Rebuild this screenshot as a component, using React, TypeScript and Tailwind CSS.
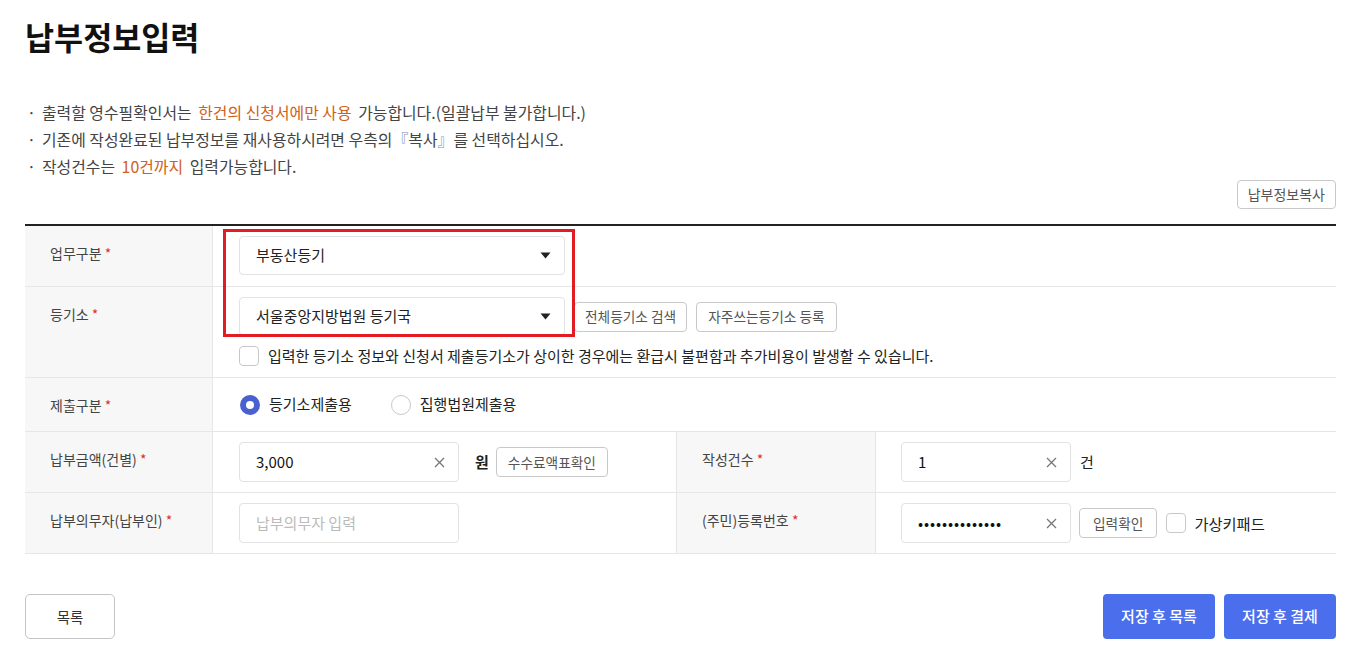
const font = { fontFamily: '"Noto Sans CJK KR", "Noto Sans", sans-serif' };

function Req({ children }: { children: React.ReactNode }) {
  return (
    <span>
      {children} <span className="text-[#e0312b]">*</span>
    </span>
  );
}

function Label({ children, wide }: { children: React.ReactNode; wide?: boolean }) {
  return (
    <div
      className={`bg-[#f7f7f7] border-r border-[#e6e6e6] pl-[25px] pt-[17px] text-[14px] leading-[20px] text-[#444] ${
        wide ? "w-[200px] border-l" : "w-[188px]"
      }`}
    >
      <Req>{children}</Req>
    </div>
  );
}

function Select({ value }: { value: string }) {
  return (
    <div className="flex h-[39px] w-[326px] items-center justify-between rounded-[4px] border border-[#e2e2e2] bg-white pl-[16px] pr-[13px] text-[15px] text-[#222]">
      <span>{value}</span>
      <svg width="11" height="7" viewBox="0 0 11 7">
        <path d="M0.5 0.5 L10.5 0.5 L5.5 6.5 Z" fill="#222" />
      </svg>
    </div>
  );
}

function SmallBtn({ children, className = "" }: { children: React.ReactNode; className?: string }) {
  return (
    <button
      className={`h-[30px] rounded-[4px] border border-[#c9c9c9] bg-white px-[10px] text-[13.7px] text-[#555] ${className}`}
    >
      {children}
    </button>
  );
}

function Check() {
  return <span className="inline-block h-[20px] w-[20px] shrink-0 rounded-[4px] border border-[#c9c9c9] bg-white" />;
}

function TextInput({
  value,
  placeholder,
  width,
  clear,
  dots,
}: {
  value?: string;
  placeholder?: string;
  width: string;
  clear?: boolean;
  dots?: boolean;
}) {
  return (
    <div
      className={`flex h-[40px] items-center justify-between rounded-[4px] border border-[#e2e2e2] bg-white pl-[16px] pr-[13px] text-[15px] ${width}`}
    >
      {value ? (
        <span className={dots ? "text-[15px] tracking-[0.9px] text-[#111]" : "text-[#111]"}>{value}</span>
      ) : (
        <span className="text-[#bbb]">{placeholder}</span>
      )}
      {clear && (
        <svg width="11" height="11" viewBox="0 0 11 11">
          <path d="M1 1 L10 10 M10 1 L1 10" stroke="#777" strokeWidth="1.3" />
        </svg>
      )}
    </div>
  );
}

export default function App() {
  return (
    <div className="min-h-[660px] bg-white text-[#333]" style={font}>
      <div className="ml-[25px] w-[1311px]">
        {/* Title */}
        <h1 className="pt-[14px] text-[31.6px] font-bold leading-[44px] text-[#111]">납부정보입력</h1>

        {/* Notice */}
        <ul className="mt-[42px] space-y-[1px] text-[15.9px] leading-[26px] text-[#444]">
          <li>
            <span className="mr-[6px] ml-[2px]">·</span>출력할 영수필확인서는{" "}
            <span className="mx-[3px] text-[#d0611a]">한건의 신청서에만 사용</span> 가능합니다.(일괄납부
            불가합니다.)
          </li>
          <li>
            <span className="mr-[6px] ml-[2px]">·</span>기존에 작성완료된 납부정보를 재사용하시려면 우측의
            <span className="text-[#7f8fb0]">『</span>복사<span className="text-[#7f8fb0]">』</span>를
            선택하십시오.
          </li>
          <li>
            <span className="mr-[6px] ml-[2px]">·</span>작성건수는{" "}
            <span className="mx-[3px] text-[#d0611a]">10건까지</span> 입력가능합니다.
          </li>
        </ul>

        <div className="flex justify-end">
          <button className="h-[29px] rounded-[4px] border border-[#c9c9c9] bg-white px-[10px] text-[14px] text-[#555]">
            납부정보복사
          </button>
        </div>

        {/* Form table */}
        <div className="mt-[15px] border-t-2 border-[#222]">
          {/* Row 1 */}
          <div className="flex h-[61px] border-b border-[#e6e6e6]">
            <Label>업무구분</Label>
            <div className="relative flex-1 pl-[26px] pt-[10px]">
              <Select value="부동산등기" />
              <div className="pointer-events-none absolute left-[10px] top-[3px] h-[108px] w-[352px] border-[3px] border-[#e31b23]" />
            </div>
          </div>
          {/* Row 2 */}
          <div className="flex h-[91px] border-b border-[#e6e6e6]">
            <Label>등기소</Label>
            <div className="flex-1 pl-[26px] pt-[10px]">
              <div className="flex items-center gap-[9px]">
                <Select value="서울중앙지방법원 등기국" />
                <SmallBtn>전체등기소 검색</SmallBtn>
                <SmallBtn className="px-[11px]">자주쓰는등기소 등록</SmallBtn>
              </div>
              <div className="mt-[9px] flex items-center gap-[9px] text-[15px] text-[#222]">
                <Check />
                <span>입력한 등기소 정보와 신청서 제출등기소가 상이한 경우에는 환급시 불편함과 추가비용이 발생할 수 있습니다.</span>
              </div>
            </div>
          </div>

          {/* Row 3 */}
          <div className="flex h-[54px] border-b border-[#e6e6e6]">
            <Label>제출구분</Label>
            <div className="flex flex-1 items-center pl-[27px] text-[15px] text-[#222]">
              <span className="flex items-center gap-[9px]">
                <span className="flex h-[20px] w-[20px] items-center justify-center rounded-full bg-[#4a5fd0]">
                  <span className="h-[8px] w-[8px] rounded-full bg-white" />
                </span>
                등기소제출용
              </span>
              <span className="ml-[39px] flex items-center gap-[9px]">
                <span className="h-[20px] w-[20px] rounded-full border border-[#c9c9c9] bg-white" />
                집행법원제출용
              </span>
            </div>
          </div>

          {/* Row 4 */}
          <div className="flex h-[61px] border-b border-[#e6e6e6]">
            <Label>납부금액(건별)</Label>
            <div className="flex w-[463px] items-center pl-[26px]">
              <TextInput value="3,000" width="w-[220px]" clear />
              <span className="ml-[16px] text-[15px] font-bold text-[#222]">원</span>
              <span className="ml-[7px]">
                <SmallBtn className="px-[11px]">수수료액표확인</SmallBtn>
              </span>
            </div>
            <Label wide>작성건수</Label>
            <div className="flex flex-1 items-center pl-[25px]">
              <TextInput value="1" width="w-[170px]" clear />
              <span className="ml-[9px] text-[15px] text-[#222]">건</span>
            </div>
          </div>

          {/* Row 5 */}
          <div className="flex h-[61px] border-b border-[#e6e6e6]">
            <Label>납부의무자(납부인)</Label>
            <div className="flex w-[463px] items-center pl-[26px]">
              <TextInput placeholder="납부의무자 입력" width="w-[220px]" />
            </div>
            <Label wide>(주민)등록번호</Label>
            <div className="flex flex-1 items-center pl-[25px]">
              <TextInput value="••••••••••••••" width="w-[170px]" clear dots />
              <span className="ml-[8px]">
                <SmallBtn className="px-[13px]">입력확인</SmallBtn>
              </span>
              <span className="ml-[9px] flex items-center gap-[8px] text-[15.3px] text-[#222]">
                <Check />
                가상키패드
              </span>
            </div>
          </div>
        </div>

        {/* Footer buttons */}
        <div className="mt-[40px] flex items-center justify-between">
          <button className="h-[45px] w-[90px] rounded-[5px] border border-[#c4c4c4] bg-white text-[14.5px] text-[#333]">
            목록
          </button>
          <div className="flex gap-[9px]">
            <button className="h-[45px] w-[112px] rounded-[4px] bg-[#4b6fec] text-[15px] font-medium text-white">
              저장 후 목록
            </button>
            <button className="h-[45px] w-[112px] rounded-[4px] bg-[#4b6fec] text-[15px] font-medium text-white">
              저장 후 결제
            </button>
          </div>
        </div>
      </div>
    </div>
  );
}
